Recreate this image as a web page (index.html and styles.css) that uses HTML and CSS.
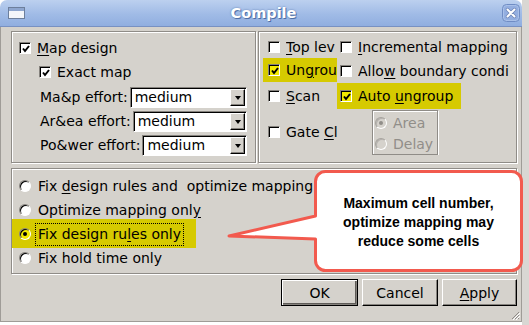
FILE: index.html
```html
<!DOCTYPE html>
<html lang="en">
<head>
    <meta charset="UTF-8">
    <title>Compile</title>
    <link rel="stylesheet" href="styles.css">
</head>
<body>
<div class="screen">
    <div class="window">
        <div class="titlebar">
            <svg class="win-icon" width="17" height="12" viewBox="0 0 17 12">
                <rect x="0.5" y="0.5" width="16" height="11" fill="#f4f6fa" stroke="#6d7f9c"/>
                <rect x="1" y="1" width="15" height="3" fill="#8ea6cf"/>
            </svg>
            <span class="title">Compile</span>
            <svg class="close" width="18" height="18" viewBox="0 0 18 18">
                <rect x="0.5" y="0.5" width="17" height="17" rx="4" fill="#a9c0e8" stroke="#6f8cc4"/>
                <rect x="2" y="2" width="14" height="14" rx="3" fill="#93aee0"/>
                <path d="M5.5 5.5 L12.5 12.5 M12.5 5.5 L5.5 12.5" stroke="#6d84b5" stroke-width="3.4" stroke-linecap="round"/>
                <path d="M5.5 5.5 L12.5 12.5 M12.5 5.5 L5.5 12.5" stroke="#fff" stroke-width="2" stroke-linecap="round"/>
            </svg>
        </div>
        <div class="body">
            <div class="top">
                <div class="panel map-panel">
                    <div class="row">
                        <span class="cb"><svg width="8" height="8" viewBox="0 0 8 8"><path d="M1 3.5 L3 6 L7 1" fill="none" stroke="#000" stroke-width="2"/></svg></span>
                        <span><u>M</u>ap design</span>
                    </div>
                    <div class="row exact">
                        <span class="cb"><svg width="8" height="8" viewBox="0 0 8 8"><path d="M1 3.5 L3 6 L7 1" fill="none" stroke="#000" stroke-width="2"/></svg></span>
                        <span>Exact map</span>
                    </div>
                    <div class="row effort first">
                        <span>Ma&amp;p effort:</span>
                        <span class="combo"><span class="val">medium</span><span class="arrow"></span></span>
                    </div>
                    <div class="row effort">
                        <span>Ar&amp;ea effort:</span>
                        <span class="combo"><span class="val">medium</span><span class="arrow"></span></span>
                    </div>
                    <div class="row effort">
                        <span>Po&amp;wer effort:</span>
                        <span class="combo"><span class="val">medium</span><span class="arrow"></span></span>
                    </div>
                </div>
                <div class="panel opt-panel">
                    <div class="cell c1"><span class="cb"></span><span class="clip"><u>T</u>op lev</span></div>
                    <div class="cell c2"><span class="cb"></span><span><u>I</u>ncremental mapping</span></div>
                    <div class="cell c1 hl ungroup">
                        <span class="cb lit"><svg width="8" height="8" viewBox="0 0 8 8"><path d="M1 3.5 L3 6 L7 1" fill="none" stroke="#000" stroke-width="2"/></svg></span>
                        <span class="clip">Un<u>g</u>rou</span>
                    </div>
                    <div class="cell c2"><span class="cb"></span><span class="clip wide">Allo<u>w</u> boundary condit</span></div>
                    <div class="cell c1"><span class="cb"></span><span><u>S</u>can</span></div>
                    <div class="cell c2 hl auto">
                        <span class="cb lit"><svg width="8" height="8" viewBox="0 0 8 8"><path d="M1 3.5 L3 6 L7 1" fill="none" stroke="#000" stroke-width="2"/></svg></span>
                        <span>Auto <u>u</u>ngroup</span>
                    </div>
                    <div class="cell c1"><span class="cb"></span><span class="clip">Gate <u>C</u>l</span></div>
                    <div class="cell c2 sub-cell">
                        <div class="subframe">
                            <div class="sub-row"><span class="rb off on"></span><span>Area</span></div>
                            <div class="sub-row"><span class="rb off"></span><span>Delay</span></div>
                        </div>
                    </div>
                </div>
            </div>
            <div class="panel mode-panel">
                <div class="mode-row"><span class="rb"></span><span class="lbl">Fix <u>d</u>esign rules and&nbsp; optimize mapping</span></div>
                <div class="mode-row"><span class="rb"></span><span class="lbl">Optimize mapping onl<u>y</u></span></div>
                <div class="mode-row hl"><span class="rb on lit"></span><span class="lbl focus">Fix design ru<u>l</u>es only</span></div>
                <div class="mode-row"><span class="rb"></span><span class="lbl">Fix hold time only</span></div>
            </div>
            <div class="buttons">
                <span class="btn default">OK</span>
                <span class="btn cancel">Cancel</span>
                <span class="btn apply"><u>A</u>pply</span>
            </div>
        </div>
        <svg class="grip" width="9" height="9" viewBox="0 0 9 9">
            <path d="M8 1 L1 8 M8 4 L4 8 M8 7 L7 8" stroke="#8f8c87" stroke-width="1"/>
            <path d="M9 2 L2 9 M9 5 L5 9" stroke="#fff" stroke-width="1"/>
        </svg>
    </div>

    <svg class="callout-shape" width="300" height="103" viewBox="0 0 300 103">
        <path d="M99.5 1.5 H285.5 A10 10 0 0 1 295.5 11.5 V90.5 A10 10 0 0 1 285.5 100.5 H99.5 A10 10 0 0 1 89.5 90.5 V69 L3 66 L89.5 46 V11.5 A10 10 0 0 1 99.5 1.5 Z" fill="#fff" stroke="#f25a4e" stroke-width="3" stroke-linejoin="round"/>
    </svg>
    <div class="callout-text">Maximum cell number,<br>optimize mapping may<br>reduce some cells</div>
</div>
</body>
</html>
```

FILE: styles.css
```css
body {
    margin: 0;
    font-family: "DejaVu Sans", sans-serif;
    font-size: 14px;
    color: #000;
}
u {
    text-underline-offset: 2px;
}
.screen {
    position: relative;
    width: 529px;
    height: 325px;
    background: linear-gradient(90deg, #fff 522px, #d9d7d3 522px);
    overflow: hidden;
}
.window {
    position: relative;
    width: 522px;
    height: 322px;
    display: flex;
    flex-direction: column;
    background: #fff;
}
.titlebar {
    height: 27px;
    flex: none;
    box-sizing: border-box;
    display: flex;
    align-items: center;
    padding: 0 2px 0 8px;
    border-radius: 7px 7px 0 0;
    border-bottom: 1px solid #7891c2;
    background: linear-gradient(#bcd0ef, #a0bbe6 55%, #90aee0);
}
.win-icon {
    flex: none;
}
.title {
    flex: 1;
    text-align: center;
    font-weight: bold;
    font-size: 14.5px;
    color: #fff;
    text-shadow: 1px 1px 0 #4f6fa6, 0 0 2px #5a78ad;
}
.close {
    flex: none;
    margin-top: -1px;
}
.body {
    flex: 1;
    background: #d5d2cc;
    border: 1px solid #9f9c97;
    border-top: 0;
    padding: 4px 4px 0 10px;
}
.panel {
    box-sizing: border-box;
    border: 1px solid #8f8c87;
    box-shadow: inset 1px 1px 0 #fff, 1px 1px 0 #fff;
}
.top {
    display: flex;
    gap: 2px;
    height: 132px;
}
.map-panel {
    width: 245px;
    padding: 4px 8px 0 0;
}
.row {
    height: 24px;
    display: flex;
    align-items: center;
    white-space: nowrap;
    padding-left: 7px;
}
.row.exact {
    padding-left: 27px;
}
.row.effort {
    padding-left: 28px;
}
.row.effort.first {
    margin-top: 1px;
}
.cb {
    width: 12px;
    height: 12px;
    flex: none;
    box-sizing: border-box;
    background: #fff;
    border: 1px solid;
    border-color: #85827d #fff #fff #85827d;
    box-shadow: inset 1px 1px 0 #000;
    margin-right: 6px;
    display: flex;
    align-items: center;
    justify-content: center;
}
.cb svg {
    margin: 1px 0 0 1px;
}
.lit {
    background: #f2ea00;
}
.combo {
    flex: 1;
    margin-left: 2px;
    height: 21px;
    box-sizing: border-box;
    background: #fff;
    border: 1px solid;
    border-color: #85827d #fff #fff #85827d;
    box-shadow: inset 1px 1px 0 #000;
    display: flex;
    align-items: center;
    padding-left: 4px;
}
.combo .val {
    flex: 1;
}
.arrow {
    width: 15px;
    height: 17px;
    margin: 1px 1px 0 0;
    box-sizing: border-box;
    background: #d5d2cc;
    border: 1px solid;
    border-color: #fff #000 #000 #fff;
    box-shadow: inset -1px -1px 0 #85827d;
    display: flex;
    align-items: center;
    justify-content: center;
}
.arrow::after {
    content: "";
    border-left: 3px solid transparent;
    border-right: 3px solid transparent;
    border-top: 4px solid #000;
}
.opt-panel {
    flex: 1;
    padding: 3px 0 0 4px;
    display: grid;
    grid-template-columns: 74px 173px;
    grid-template-rows: 24px 24px 26px 46px;
}
.cell {
    display: flex;
    align-items: center;
    overflow: hidden;
    white-space: nowrap;
}
.clip {
    overflow: hidden;
    white-space: nowrap;
}
.clip.wide {
    max-width: 151px;
}
.c1 {
    padding-left: 5px;
}
.c2 {
    padding-left: 3px;
}
.hl {
    background: #d6ca00;
}
.ungroup {
    margin-top: -1px;
    margin-bottom: 1px;
}
.auto {
    width: 121px;
}
.sub-cell {
    align-items: flex-start;
}
.subframe {
    margin: 1px 0 0 32px;
    width: 66px;
    height: 45px;
    box-sizing: border-box;
    border: 1px solid #8f8c87;
    box-shadow: inset 1px 1px 0 #fff, 1px 1px 0 #fff;
    padding: 1px 0 0 2px;
}
.sub-row {
    height: 21px;
    display: flex;
    align-items: center;
    color: #918e89;
}
.sub-row .rb {
    margin-right: 6px;
}
.rb {
    width: 12px;
    height: 12px;
    flex: none;
    box-sizing: border-box;
    border-radius: 50%;
    background: #fff;
    border: 1px solid;
    border-color: #85827d #fff #fff #85827d;
    box-shadow: inset 1px 1px 0 #000;
    margin-right: 4px;
    display: flex;
    align-items: center;
    justify-content: center;
}
.rb.lit {
    background: #f2ea00;
}
.rb.on::after {
    content: "";
    width: 4px;
    height: 4px;
    border-radius: 50%;
    background: #000;
}
.rb.off {
    background: #d5d2cc;
    border-color: #a6a39e #fff #fff #a6a39e;
    box-shadow: inset 1px 1px 0 #b5b2ad;
}
.rb.off.on::after {
    background: #918e89;
}
.mode-panel {
    height: 106px;
    margin-top: 5px;
    padding-top: 5px;
}
.mode-row {
    height: 24px;
    display: flex;
    align-items: center;
    white-space: nowrap;
    overflow: hidden;
    padding-left: 7px;
}
.mode-row.hl {
    width: 184px;
    height: 29px;
    box-sizing: border-box;
    margin: -3px 0 -2px;
    padding-top: 1px;
}
.lbl {
    border: 1px dotted transparent;
    padding: 0 2px;
    line-height: 21px;
}
.lbl.focus {
    border-color: #000;
}
.buttons {
    display: flex;
    justify-content: flex-end;
    gap: 4px;
    margin-top: 5px;
}
.btn {
    width: 75px;
    height: 27px;
    box-sizing: border-box;
    background: #d5d2cc;
    border: 1px solid;
    border-color: #fff #000 #000 #fff;
    box-shadow: inset -1px -1px 0 #85827d;
    display: flex;
    align-items: center;
    justify-content: center;
}
.btn.default {
    width: 77px;
    border-color: #000;
    box-shadow: inset 1px 1px 0 #fff, inset -1px -1px 0 #85827d, inset -2px -2px 0 #5e5b57;
}
.btn.cancel {
    width: 76px;
}
.grip {
    position: absolute;
    right: 2px;
    bottom: 2px;
}
.callout-shape {
    position: absolute;
    left: 226px;
    top: 170px;
}
.callout-text {
    position: absolute;
    left: 314px;
    top: 170px;
    width: 209px;
    height: 102px;
    box-sizing: border-box;
    padding-top: 3px;
    display: flex;
    align-items: center;
    justify-content: center;
    text-align: center;
    font-family: "Liberation Sans", Arial, sans-serif;
    font-weight: bold;
    font-size: 14px;
    line-height: 19px;
}
```
